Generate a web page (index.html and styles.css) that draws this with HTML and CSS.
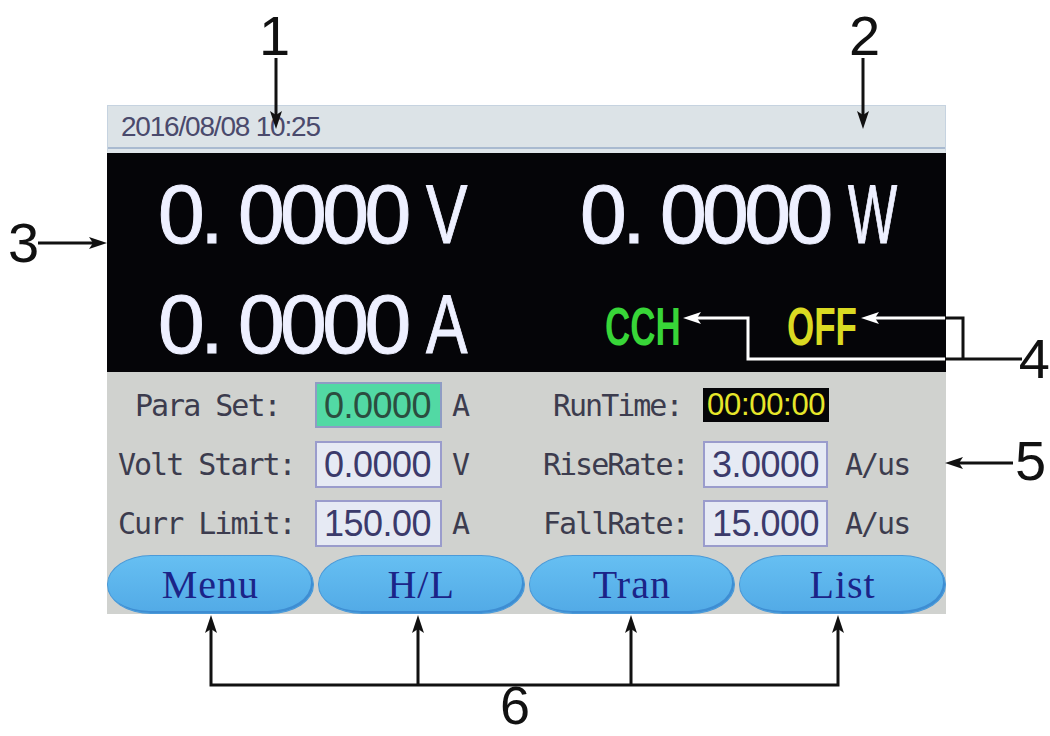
FILE: index.html
```html
<!DOCTYPE html>
<html lang="en">
<head>
  <meta charset="UTF-8">
  <title>Electronic Load - Main Screen</title>
  <link rel="stylesheet" href="styles.css">
</head>
<body>
  <div class="page">

    <!-- LCD screen -->
    <div class="screen">
      <div class="topbar">2016/08/08 10:25</div>

      <!-- Measured values -->
      <div class="readout">
        <div class="big">0. 0000 <span class="letter">V</span></div>
        <div class="big">0. 0000 <span class="letter wide">W</span></div>
        <div class="big">0. 0000 <span class="letter">A</span></div>
        <div class="state">
          <span class="mode">CCH</span>
          <span class="onoff">OFF</span>
        </div>
      </div>

      <!-- Parameters -->
      <div class="params">
        <span class="label indent">Para Set:</span>
        <span class="box active">0.0000</span>
        <span class="unit">A</span>
        <span class="label indent-sm">RunTime:</span>
        <span class="runtime">00:00:00</span>

        <span class="label">Volt Start:</span>
        <span class="box">0.0000</span>
        <span class="unit">V</span>
        <span class="label">RiseRate:</span>
        <span class="box">3.0000</span>
        <span class="unit rate">A/us</span>

        <span class="label">Curr Limit:</span>
        <span class="box">150.00</span>
        <span class="unit">A</span>
        <span class="label">FallRate:</span>
        <span class="box">15.000</span>
        <span class="unit rate">A/us</span>
      </div>

      <!-- Soft keys -->
      <div class="keys">
        <button class="key">Menu</button>
        <button class="key">H/L</button>
        <button class="key">Tran</button>
        <button class="key">List</button>
      </div>
    </div>

    <!-- Callout lines -->
    <svg class="callouts" width="1050" height="736" viewBox="0 0 1050 736">
      <defs>
        <clipPath id="lcd"><rect x="107" y="153" width="838" height="219"/></clipPath>
      </defs>
      <g stroke="#111" stroke-width="3" fill="none">
        <path d="M276 58V116"/>
        <path d="M863 58V116"/>
        <path d="M38 243H94"/>
        <path d="M1013 463H958"/>
        <path d="M211 685V628M418 685V628M631 685V628M838 685V628M209.5 685H839.5"/>
        <path d="M696 318H748V359H1022M874 318H963V359"/>
      </g>
      <g fill="#111">
        <polygon points="276,129 270,111 276,115 282,111"/>
        <polygon points="863,129 857,111 863,115 869,111"/>
        <polygon points="107,243 89,237 93,243 89,249"/>
        <polygon points="945,463 963,457 959,463 963,469"/>
        <polygon points="211,615 205,633 211,629 217,633"/>
        <polygon points="418,615 412,633 418,629 424,633"/>
        <polygon points="631,615 625,633 631,629 637,633"/>
        <polygon points="838,615 832,633 838,629 844,633"/>
      </g>
      <g clip-path="url(#lcd)">
        <path d="M696 318H748V359H1022M874 318H963V359" stroke="#fff" stroke-width="3" fill="none"/>
        <polygon points="683,318 701,312 697,318 701,324" fill="#fff"/>
        <polygon points="861,318 879,312 875,318 879,324" fill="#fff"/>
      </g>
    </svg>

    <span class="num n1">1</span>
    <span class="num n2">2</span>
    <span class="num n3">3</span>
    <span class="num n4">4</span>
    <span class="num n5">5</span>
    <span class="num n6">6</span>
  </div>
</body>
</html>
```

FILE: styles.css
```css
/* Page */
body {
  margin: 0;
  background: #fff;
  overflow: hidden;
}

.page {
  position: relative;
  width: 1050px;
  height: 736px;
  overflow: hidden;
  font-family: "Liberation Sans", Arial, sans-serif;
}

/* Screen */
.screen {
  width: 839px;
  margin: 105px 0 0 107px;
  background: #d0d2cf;
}

.topbar {
  box-sizing: border-box;
  height: 48px;
  padding-left: 13px;
  border: 1px solid #c6d3e0;
  border-bottom: 4px solid #dfe6ea;
  background: #dce3e7;
  box-shadow: inset 0 -2px 0 #a9bad0;
  color: #4a4a6c;
  font-size: 28px;
  line-height: 42px;
  letter-spacing: -1.2px;
}

/* Readout */
.readout {
  box-sizing: border-box;
  height: 219px;
  padding: 19px 0 0 51px;
  display: grid;
  grid-template-columns: 422px 1fr;
  row-gap: 20px;
  background: #050508;
}

.big {
  color: #eef0ff;
  font-size: 84px;
  line-height: 84px;
  letter-spacing: -4.5px;
  white-space: pre;
  -webkit-text-stroke: 1px #eef0ff;
}

.letter {
  display: inline-block;
  transform: scaleX(.74);
  transform-origin: left;
}

.letter.wide {
  transform: scaleX(.62);
}

.state {
  display: flex;
  align-items: center;
  padding-left: 25px;
  font-size: 53px;
  font-weight: bold;
  line-height: 84px;
}

.mode,
.onoff {
  display: inline-block;
  transform: scaleX(.66);
  transform-origin: left;
}

.mode {
  width: 182px;
  color: #38d638;
}

.onoff {
  color: #dada22;
}

/* Parameters */
.params {
  display: grid;
  grid-template-columns: 197px 127px 101px 160px 125px 1fr;
  grid-auto-rows: 47px;
  row-gap: 12px;
  padding: 10px 0 8px 11px;
  align-items: center;
  color: #3c3c4e;
}

.label,
.unit {
  font-family: "DejaVu Sans Mono", "Liberation Mono", monospace;
  font-size: 30px;
  letter-spacing: -2px;
  white-space: pre;
}

.indent {
  padding-left: 17px;
}

.indent-sm {
  padding-left: 10px;
}

.unit {
  padding-left: 10px;
}

.unit.rate {
  padding-left: 17px;
}

.box {
  box-sizing: border-box;
  height: 47px;
  padding-left: 7px;
  border: 2px solid #9a9ccc;
  background: #e6eaf4;
  color: #3b3a6b;
  font-size: 36px;
  line-height: 43px;
  letter-spacing: -0.5px;
}

.box.active {
  height: 46px;
  align-self: start;
  border-color: #8f9cc4;
  background: #52d9a4;
  color: #2b4d3f;
}

.runtime {
  grid-column: span 2;
  justify-self: start;
  align-self: start;
  margin-top: 6px;
  padding: 0 4px;
  background: #050508;
  color: #e6e62a;
  font-size: 31px;
  line-height: 34px;
  letter-spacing: -0.3px;
}

/* Soft keys */
.keys {
  display: flex;
  gap: 4px;
  height: 59px;
}

.key {
  flex: 1;
  border: 1px solid #4b9ad8;
  border-radius: 44px / 29px;
  background: linear-gradient(#66bff2, #52aae6);
  box-shadow: inset -2px -2px 0 #3e8dd2;
  color: #1b2488;
  font-family: "Liberation Serif", "Times New Roman", serif;
  font-size: 40px;
  letter-spacing: 1px;
  padding: 0;
}

/* Callouts */
.callouts {
  position: absolute;
  left: 0;
  top: 0;
  pointer-events: none;
}

.num {
  position: absolute;
  color: #111;
  font-size: 56px;
  line-height: 42px;
}

.n1 { left: 259px; top: 15px; }
.n2 { left: 849px; top: 15px; }
.n3 { left: 8px; top: 222px; }
.n4 { right: 0; top: 338px; }
.n5 { left: 1015px; top: 440px; }
.n6 { left: 500px; top: 684px; font-size: 54px; }
```
